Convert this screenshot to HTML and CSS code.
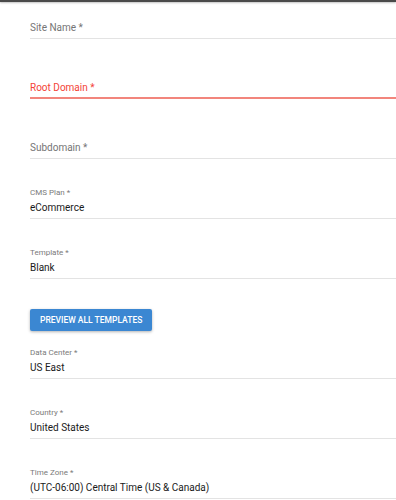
FILE: index.html
```html
<!DOCTYPE html>
<html lang="en">
<head>
  <meta charset="UTF-8" />
  <meta name="viewport" content="width=device-width, initial-scale=1" />
  <title>New Site</title>
  <link rel="stylesheet" href="styles.css">
</head>
<body>
  <div class="topbar"></div>

  <form class="site-form">
    <div class="field first">
      <span class="placeholder">Site Name *</span>
    </div>
    <div class="field error">
      <span class="placeholder">Root Domain *</span>
    </div>
    <div class="field">
      <span class="placeholder">Subdomain *</span>
    </div>
    <div class="field">
      <span class="label">CMS Plan *</span>
      <span class="value">eCommerce</span>
    </div>
    <div class="field">
      <span class="label">Template *</span>
      <span class="value">Blank</span>
    </div>

    <button type="button" class="button">Preview All Templates</button>

    <div class="field after-button">
      <span class="label">Data Center *</span>
      <span class="value">US East</span>
    </div>
    <div class="field">
      <span class="label">Country *</span>
      <span class="value">United States</span>
    </div>
    <div class="field">
      <span class="label">Time Zone *</span>
      <span class="value">(UTC-06:00) Central Time (US &amp; Canada)</span>
    </div>
  </form>
</body>
</html>
```

FILE: styles.css
```css
body {
  font-family: 'Roboto', 'Liberation Sans', sans-serif;
  background-color: #fff;
  color: #212121;
  margin: 0;
  padding: 0;
  overflow: hidden;
}
.topbar {
  height: 2px;
  background-color: #4a4a4a;
  box-shadow: 0 1px 2px rgba(0,0,0,0.25);
}
.site-form {
  padding-left: 30px;
}
.field {
  box-sizing: border-box;
  height: 36px;
  margin-top: 24px;
  padding-bottom: 3px;
  border-bottom: 1px solid #e3e3e3;
  display: flex;
  flex-direction: column;
  justify-content: flex-end;
}
.field.first {
  margin-top: 1px;
}
.field.after-button {
  margin-top: 12px;
}
.field.error {
  border-bottom: 2px solid #f2857c;
  padding-bottom: 2px;
}
.placeholder {
  font-size: 10px;
  line-height: 14px;
  color: #757575;
}
.error .placeholder {
  color: #f44336;
}
.label {
  font-size: 8px;
  line-height: 10px;
  color: #7a7a7a;
  margin-bottom: 3px;
}
.value {
  font-size: 10px;
  line-height: 14px;
  color: #1a1a1a;
}
.button {
  display: block;
  margin-top: 30px;
  height: 22px;
  padding: 0 10px;
  background-color: #3b87d2;
  color: #fff;
  border: none;
  border-radius: 2px;
  font-family: 'Roboto', 'Liberation Sans', sans-serif;
  font-weight: 500;
  font-size: 8.5px;
  text-transform: uppercase;
  box-shadow: 0 1px 3px rgba(0,0,0,0.3);
  cursor: pointer;
}
```
